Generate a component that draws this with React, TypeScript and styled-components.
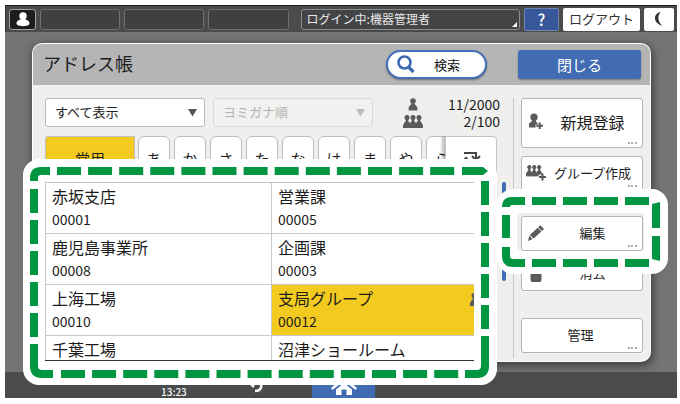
import React from "react";
import styled, { createGlobalStyle, css } from "styled-components";

const jp = `"Noto Sans CJK JP", sans-serif`;

const Global = createGlobalStyle`
  *, *::before, *::after { box-sizing: border-box; }
  body { margin: 0; background: #fff; font-family: ${jp}; color: #1c1c1c; }
  button, select { font-family: inherit; color: inherit; margin: 0; padding: 0; }
  svg { display: block; flex: none; }
`;

const Page = styled.div`
  display: flex;
  min-height: 100vh;
  padding: 5px 3px 6px 5px;
`;

const Screen = styled.div`
  flex: 1;
  min-width: 0;
  display: flex;
  flex-direction: column;
  background: #747474;
`;

const TopBar = styled.header`
  display: flex;
  align-items: center;
  gap: 4px;
  height: 27px;
  padding: 0 3px 0 3px;
  background: #4a4b4d;
  border-top: 1px solid #1e1e1e;
  border-left: 1px solid #333;
`;

const slot = css`
  height: 21px;
  border: 1px solid #6e6e6e;
  border-radius: 3px;
`;

const UserButton = styled.button`
  ${slot}
  display: flex;
  align-items: center;
  justify-content: center;
  width: 27px;
  background: #1d1d1d;
  border-color: #a5a5a5;
`;

const Slot = styled.div`
  ${slot}
  flex: 81 1 0;
  background: #3f4042;
`;

const LoginStatus = styled.div`
  ${slot}
  flex: 220 1 0;
  display: flex;
  align-items: flex-end;
  justify-content: space-between;
  margin-left: 8px;
  padding-left: 5px;
  border-color: #8d8d8d;
  background: #434446;
  color: #e8e8e8;
  font-size: 12px;
  line-height: 20px;
  white-space: nowrap;
`;

const TopButton = styled.button<{ $w: number; $blue?: boolean }>`
  display: flex;
  align-items: center;
  justify-content: center;
  width: ${(p) => p.$w}px;
  height: 23px;
  border: ${(p) => (p.$blue ? "1px solid #7186b4" : "0")};
  border-radius: 2px;
  background: ${(p) => (p.$blue ? "#38579a" : "#fff")};
  color: ${(p) => (p.$blue ? "#fff" : "#333")};
  font-size: ${(p) => (p.$blue ? 16 : 13)}px;
  font-weight: ${(p) => (p.$blue ? 500 : 400)};
  line-height: 20px;
  white-space: nowrap;
`;

const Panel = styled.section`
  flex: 1;
  display: flex;
  flex-direction: column;
  margin: 12px 27px 11px 28px;
  border-radius: 9px;
  background: #efefee;
  box-shadow: 0 0 0 1px #fff, 1px 3px 8px 2px rgba(0, 0, 0, 0.45);
`;

const PanelHeader = styled.div`
  display: flex;
  align-items: center;
  height: 41px;
  padding: 0 9px 0 10px;
  border-radius: 9px 9px 0 0;
  background: #b5b5b5;
`;

const Title = styled.h1`
  flex: 1;
  margin: 0 0 4px;
  font-size: 18px;
  font-weight: 400;
  line-height: 24px;
`;

const SearchButton = styled.button`
  display: flex;
  align-items: center;
  gap: 19px;
  width: 101px;
  height: 29px;
  padding-left: 9px;
  margin-right: 31px;
  border: 2px solid #4470b8;
  border-radius: 15px;
  background: #fff;
  box-shadow: 0 1px 2px rgba(0, 0, 0, 0.4);
  font-size: 13px;
  color: #111;
`;

const CloseButton = styled.button`
  width: 123px;
  height: 29px;
  border: 0;
  border-radius: 3px;
  background: #416bb3;
  box-shadow: 0 1px 2px rgba(0, 0, 0, 0.35);
  color: #fff;
  font-size: 15px;
  line-height: 26px;
`;

const PanelBody = styled.div`
  flex: 1;
  display: flex;
  gap: 7px;
  padding: 13px 7px 0 12px;
`;

const Main = styled.main`
  flex: 1;
  min-width: 0;
  display: flex;
  flex-direction: column;
`;

const Filters = styled.div`
  display: flex;
  align-items: center;
  gap: 8px;
  height: 29px;
  padding-right: 6px;
`;

const SelectBox = styled.label<{ $muted?: boolean }>`
  position: relative;
  flex: 0 0 160px;
  height: 29px;
  color: ${(p) => (p.$muted ? "#b4b4b4" : "#222")};

  select {
    appearance: none;
    width: 100%;
    height: 100%;
    padding: 0 24px 2px 9px;
    border: 1px solid ${(p) => (p.$muted ? "#d9d9d9" : "#b9b9b9")};
    border-radius: 3px;
    background: ${(p) => (p.$muted ? "#f1f1f0" : "#fff")};
    font-size: 13px;
    opacity: 1;
  }

  svg {
    position: absolute;
    right: 8px;
    top: 10px;
    fill: ${(p) => (p.$muted ? "#bcbcbc" : "#555")};
    pointer-events: none;
  }
`;

const Counts = styled.dl`
  display: grid;
  grid-template-columns: 20px 1fr;
  align-items: center;
  justify-items: center;
  flex: 1;
  margin: 0 0 0 22px;
  grid-auto-rows: 17px;

  dt, dd { margin: 0; }
  dd {
    justify-self: end;
    font-size: 14px;
    line-height: 17px;
  }
`;

const Tabs = styled.div`
  display: flex;
  gap: 4px;
  height: 46px;
  margin: 9px 9px 0 0;
  overflow: hidden;
`;

const Tab = styled.button<{ $active?: boolean }>`
  flex: ${(p) => (p.$active ? "0 0 90px" : "0 0 32px")};
  height: 46px;
  padding-bottom: 2px;
  margin-right: ${(p) => (p.$active ? -1 : 0)}px;
  border: 1px solid #bdbdbd;
  border-radius: ${(p) => (p.$active ? "3px 0 0 0" : "6px 6px 0 0")};
  background: ${(p) => (p.$active ? "#f3cb20" : "#fff")};
  font-size: 15px;
  white-space: nowrap;
`;

const TabStrip = styled.div`
  flex: 1;
  min-width: 0;
  display: flex;
  gap: 4px;
  overflow: hidden;
`;

const SwitchTab = styled.button`
  display: flex;
  justify-content: center;
  flex: 0 0 52px;
  height: 50px;
  padding-top: 13px;
  margin-left: -4px;
  border: 1px solid #c4c4c4;
  border-radius: 0 4px 0 0;
  background: #fff;
  box-shadow: -3px 0 3px rgba(0, 0, 0, 0.25);
`;

const ListArea = styled.div`
  position: relative;
  flex: 1;
  display: flex;
  gap: 5px;
`;

const ListFrame = styled.div`
  position: relative;
  flex: 1;
  display: flex;
`;

const List = styled.div`
  flex: 1 1 0;
  height: 179px;
  display: grid;
  grid-template-columns: 1fr 1fr;
  grid-auto-rows: 51px;
  overflow: hidden;
  border-top: 1px solid #c2c2c2;
  border-bottom: 1px solid #333;
  background: #fff;
`;

const Entry = styled.button<{ $selected?: boolean }>`
  position: relative;
  display: flex;
  flex-direction: column;
  align-items: flex-start;
  padding: 2px 0 0 6px;
  border: solid #c9c9c9;
  border-width: 0 0 1px 1px;
  background: ${(p) => (p.$selected ? "#f3cb20" : "#fff")};
  font-size: 16px;
  line-height: 23px;
  white-space: nowrap;

  small {
    font-size: 14px;
    line-height: 23px;
  }
  svg {
    position: absolute;
    right: 7px;
    top: 8px;
  }
`;

const Thumb = styled.div`
  width: 4px;
  height: 99px;
  border-radius: 2px;
  background: #416bb3;
`;

const Divider = styled.div`
  width: 1px;
  margin-bottom: 3px;
  background: #c6c6c6;
`;

const Aside = styled.aside`
  flex: 0 0 122px;
  display: flex;
  flex-direction: column;
`;

const ActionFrame = styled.div<{ $gap?: number }>`
  position: relative;
  margin-top: ${(p) => p.$gap ?? 0}px;
`;

const Action = styled.button<{ $large?: boolean }>`
  position: relative;
  display: grid;
  grid-template-columns: 24px 1fr;
  align-items: center;
  justify-items: center;
  width: 100%;
  height: ${(p) => (p.$large ? 50 : 35)}px;
  padding: 0 5px 2px 2px;
  border: 1px solid #b4b4b4;
  border-radius: 3px;
  background: #fff;
  font-size: ${(p) => (p.$large ? 16 : 13)}px;
  white-space: nowrap;
`;

const Label = styled.span<{ $wide?: boolean }>`
  ${(p) => p.$wide && "grid-column: 1 / -1;"}
`;

const Dots = styled.span`
  position: absolute;
  right: 5px;
  bottom: 3px;
  width: 9px;
  border-bottom: 2px dotted #aaa;
`;

const BottomBar = styled.footer`
  display: flex;
  height: 26px;
  background: #4a4b4d;
  color: #f4f4f4;
  overflow: hidden;
`;

const Clock = styled.time`
  flex: 0 1 220px;
  padding: 13px 0 0 156px;
  font-size: 10px;
  font-weight: 500;
  line-height: 13px;
`;

const NavButton = styled.button<{ $home?: boolean }>`
  display: flex;
  justify-content: center;
  align-items: flex-start;
  width: 63px;
  height: 26px;
  padding-top: 2px;
  margin-left: ${(p) => (p.$home ? 24 : 0)}px;
  border: 0;
  background: ${(p) => (p.$home ? "#416bb3" : "transparent")};
`;

const Callout = styled.div<{ $inset: string; $widths: string }>`
  position: absolute;
  z-index: 2;
  inset: ${(p) => p.$inset};
  border: solid #fff;
  border-width: ${(p) => p.$widths};
  border-radius: 16px;
  pointer-events: none;
`;

const Dashes = styled.svg<{ $inset: string }>`
  position: absolute;
  z-index: 3;
  inset: ${(p) => p.$inset};
  pointer-events: none;
  fill: none;
  stroke: #009540;
  stroke-width: 8;
`;

const Pawn = ({ x = 0 }: { x?: number }) => (
  <g transform={`translate(${x} 0)`}>
    <circle cx="5" cy="3" r="2.8" />
    <path d="M3.6 5h2.8c0 2 2.8 2.6 3 5v2.6H.6V10c.2-2.4 3-3 3-5z" />
  </g>
);

const Person = () => (
  <svg width="10" height="13" viewBox="0 0 10 13" fill="#5a5a5a"><Pawn /></svg>
);

const Figures = () => (
  <>
    {[0, 6, 12].map((x) => (
      <g key={x} transform={`translate(${x} 0)`}>
        <circle cx="4" cy="2.600" r="2.500" />
        <path d="M2.700 4h2.600v2.200l1.700 1.800v5H1V8l1.700-1.800z" />
      </g>
    ))}
    <path d="M0 9.500h20V13H0z" />
  </>
);

const Group = () => (
  <svg width="20" height="13" viewBox="0 0 20 13" fill="#5a5a5a"><Figures /></svg>
);

const AddPerson = () => (
  <svg width="16" height="18" viewBox="0 0 16 18" fill="#5a5a5a">
    <circle cx="6" cy="4.2" r="3.6" />
    <path d="M4.4 7h3.4c0 1.600.8 2.200 1.800 3.200v4.300H1v-3.300C1.200 9 4.400 9 4.400 7z" />
    <path d="M7.500 11.500h7v6h-7z" fill="#fff" opacity=".8" />
    <path d="M10.700 9.500h2v2.300H15v2h-2.300V16h-2v-2.200H8.400v-2h2.300z" />
  </svg>
);

const AddGroup = () => (
  <svg width="21" height="16" viewBox="0 0 21 16" fill="#5a5a5a">
    <g transform="scale(.82 .86)"><Figures /></g>
    <path d="M12.500 9.500h8v6h-8z" fill="#fff" opacity=".9" />
    <path d="M15.500 8.500h2V11H20v2h-2.500v2.500h-2V13H13v-2h2.500z" />
  </svg>
);

const Pencil = () => (
  <svg width="18" height="18" viewBox="0 0 18 18" fill="#5a5a5a">
    <path d="M13.300 1.200 17 4.900 14.900 7 11.200 3.300zM10.700 3.800 14.400 7.500 6.700 14.600 2.800 10.900zM2.300 11.700 5.700 15 1 17z" />
  </svg>
);

const Trash = () => (
  <svg width="12" height="18" viewBox="0 0 12 18" fill="#5a5a5a">
    <path d="M4 0h4v1.500h4v2H0v-2h4zM.5 4.500h11V16q0 2-2 2h-7q-2 0-2-2z" />
  </svg>
);

const Arrow = () => (
  <svg width="9" height="9" viewBox="0 0 9 9"><path d="M0 1h9L4.500 8.500z" /></svg>
);

const kana = ["あ", "か", "さ", "た", "な", "は", "ま", "や", "ら"];

const entries = [
  { name: "赤坂支店", id: "00001" },
  { name: "営業課", id: "00005" },
  { name: "鹿児島事業所", id: "00008" },
  { name: "企画課", id: "00003" },
  { name: "上海工場", id: "00010" },
  { name: "支局グループ", id: "00012", group: true },
  { name: "千葉工場", id: "" },
  { name: "沼津ショールーム", id: "" },
];

export default function App() {
  return (
    <Page>
      <Global />
      <Screen>
        <TopBar>
          <UserButton aria-label="ユーザー">
            <svg width="14" height="15" viewBox="0 0 14 15" fill="#fff">
              <circle cx="7" cy="4" r="3.700" />
              <path d="M5.300 6h3.400c0 2 4.800 1.800 4.800 5.500 0 3.500-13 3.500-13 0C.5 7.800 5.300 8 5.300 6z" />
            </svg>
          </UserButton>
          <Slot />
          <Slot />
          <Slot />
          <LoginStatus>
            ログイン中:機器管理者
            <svg width="8" height="8" viewBox="0 0 8 8" fill="#fff"><path d="M6 1v5H1z" /></svg>
          </LoginStatus>
          <TopButton $w={35} $blue aria-label="ヘルプ">?</TopButton>
          <TopButton $w={77}>ログアウト</TopButton>
          <TopButton $w={30} aria-label="スリープ">
            <svg width="12" height="16" viewBox="0 0 12 16" fill="#333">
              <path d="M7.500 1C0 2.500-.5 12 9.500 15 5 11.500 4 5.500 7.500 1z" />
            </svg>
          </TopButton>
        </TopBar>

        <Panel>
          <PanelHeader>
            <Title>アドレス帳</Title>
            <SearchButton>
              <svg width="18" height="19" viewBox="0 0 18 19" fill="none" stroke="#3a68b2">
                <circle cx="7.500" cy="7.500" r="6" strokeWidth="2.500" />
                <path d="m11.500 12 5 5" strokeWidth="3.200" />
              </svg>
              検索
            </SearchButton>
            <CloseButton>閉じる</CloseButton>
          </PanelHeader>

          <PanelBody>
            <Main>
              <Filters>
                <SelectBox>
                  <select aria-label="表示"><option>すべて表示</option></select>
                  <Arrow />
                </SelectBox>
                <SelectBox $muted>
                  <select aria-label="並び順"><option>ヨミガナ順</option></select>
                  <Arrow />
                </SelectBox>
                <Counts>
                  <dt><Person /></dt>
                  <dd>11/2000</dd>
                  <dt><Group /></dt>
                  <dd>2/100</dd>
                </Counts>
              </Filters>

              <Tabs>
                <Tab $active>常用</Tab>
                <TabStrip>
                  {kana.map((k) => <Tab key={k}>{k}</Tab>)}
                </TabStrip>
                <SwitchTab aria-label="切り替え">
                  <svg width="20" height="18" viewBox="0 0 20 18" fill="none" stroke="#444" strokeWidth="2">
                    <path d="M3 3h12v6M11 6l4 4 4-4M17 16H5V9M9 12 5 8l-4 4" />
                  </svg>
                </SwitchTab>
              </Tabs>

              <ListArea>
                <ListFrame>
                  <List>
                    {entries.map((e) => (
                      <Entry key={e.name} $selected={e.group}>
                        {e.name}
                        <small>{e.id}</small>
                        {e.group && <Group />}
                      </Entry>
                    ))}
                  </List>
                  <Callout $inset="-23px 0 -24px -22px" $widths="23px 23px 24px 22px" />
                  <Dashes $inset="-23px 0 -24px -22px" width="474" height="226" viewBox="0 0 474 226">
                    <path d="M11 22v-3q0-7 7-7h9M11 185v22q0 8 8 8h11M462 177v30q0 8-8 8h-12" />
                    <path d="M34 12H432M38 215H436" strokeDasharray="24 7.1" />
                    <path d="M11 30V178M462 22V170" strokeDasharray="24 7" />
                    <path d="M439 8h21l5 4-5 4h-21z" fill="#009540" stroke="none" />
                  </Dashes>
                </ListFrame>
                <Thumb />
              </ListArea>
            </Main>
            <Divider />
            <Aside>
              <ActionFrame>
                <Action $large><AddPerson /><Label>新規登録</Label><Dots /></Action>
              </ActionFrame>
              <ActionFrame $gap={8}>
                <Action><AddGroup /><Label>グループ作成</Label><Dots /></Action>
              </ActionFrame>
              <ActionFrame $gap={25}>
                <Action><Pencil /><Label>編集</Label><Dots /></Action>
                <Callout $inset="-27px -25px -23px -24px" $widths="24px 24px 23px 20px" />
                <Dashes $inset="-27px -25px -23px -24px" width="171" height="85" viewBox="0 0 171 85">
                  <path d="M9 18q0-6 6-6h13M9 58v9q0 7 7 7h12M9 26v23" />
                  <path d="M35 12H153M35 74H153" strokeDasharray="24 7" />
                  <path d="M155 15l8-2v26h-8zM155 47h8v25l-8-2z" fill="#009540" stroke="none" />
                </Dashes>
              </ActionFrame>
              <ActionFrame $gap={5}>
                <Action><Trash /><Label>消去</Label></Action>
              </ActionFrame>
              <ActionFrame $gap={27}>
                <Action><Label $wide>管理</Label><Dots /></Action>
              </ActionFrame>
            </Aside>
          </PanelBody>
        </Panel>

        <BottomBar>
          <Clock>13:23</Clock>
          <NavButton aria-label="戻る">
            <svg width="22" height="20" viewBox="0 0 22 20" fill="none" stroke="#f4f4f4" strokeWidth="2.500">
              <path d="M8 3 3 8l5 5M3 8h8c6 0 6 9-2 9" />
            </svg>
          </NavButton>
          <NavButton $home aria-label="ホーム">
            <svg width="26" height="22" viewBox="0 0 26 22" fill="#fff">
              <path d="M13 3 0 14l1.500 2L13 6.500 24.500 16l1.500-2z" />
              <path d="M13 9 5 15.500V21h5.500v-5.500h5V21H21v-5.500z" />
            </svg>
          </NavButton>
        </BottomBar>
      </Screen>
    </Page>
  );
}
